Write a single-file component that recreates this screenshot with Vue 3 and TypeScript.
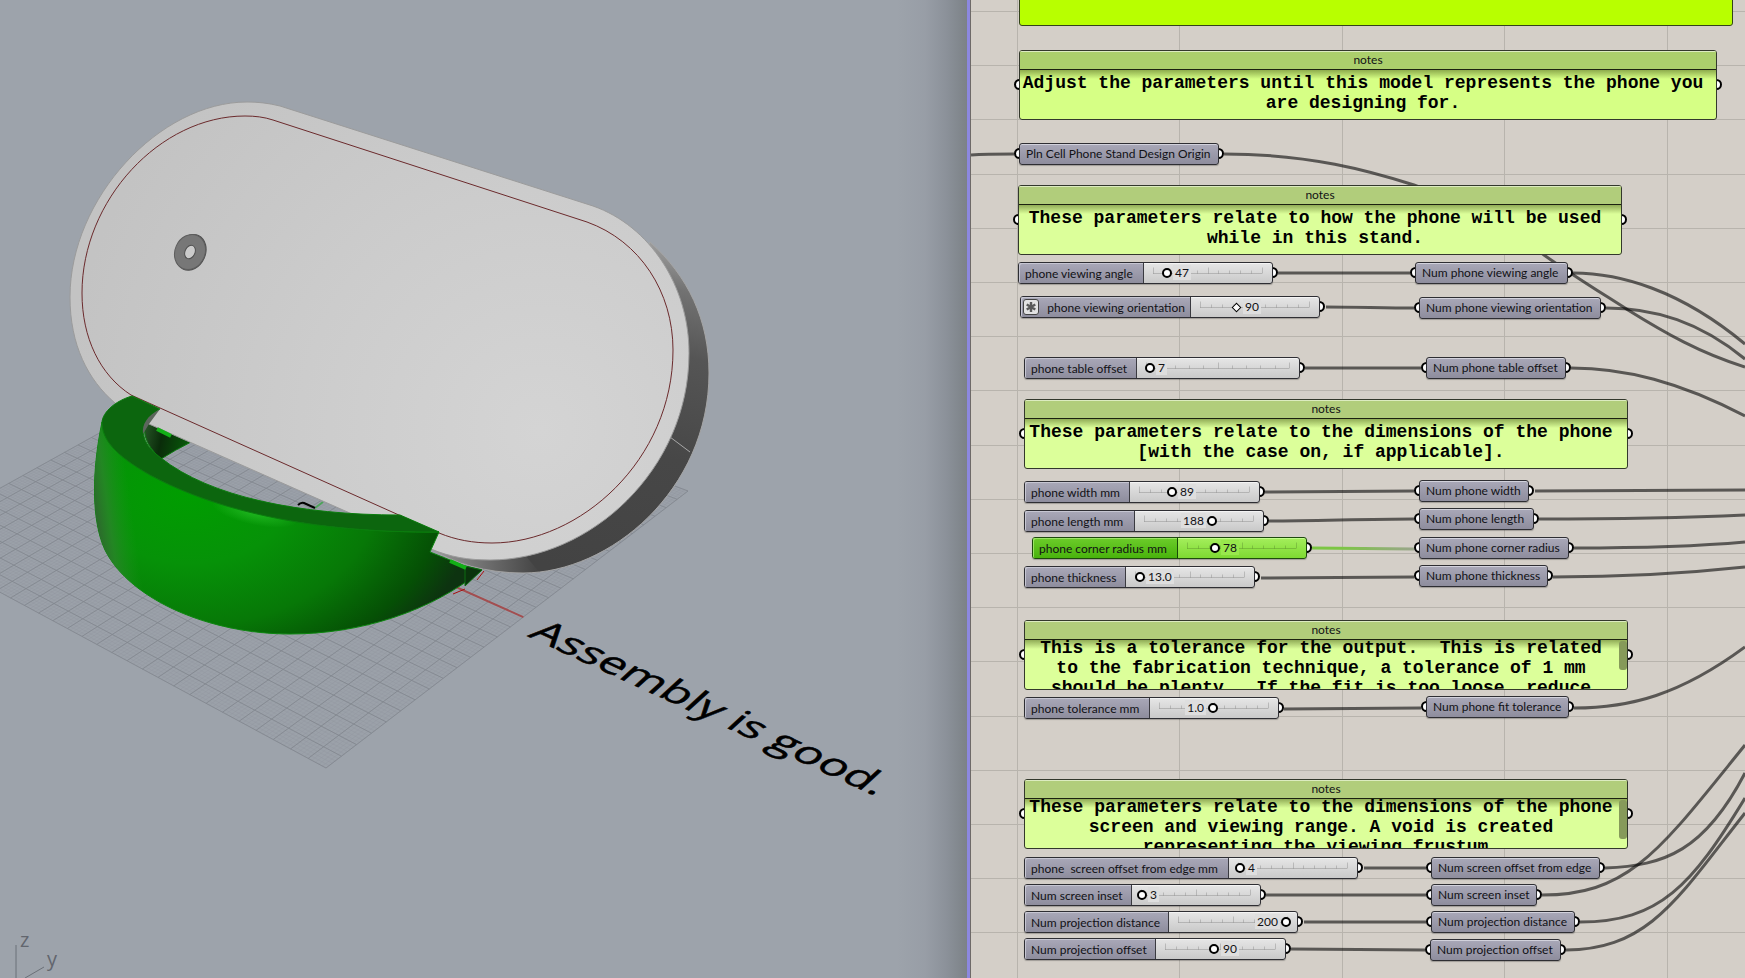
<script setup lang="ts">
import { reactive } from 'vue'

interface Note { x: number; y: number; w: number; lines: string[]; bright?: boolean; scroll?: number }
interface Param { x: number; y: number; w: number; label: string }
interface Slider {
  id: string; x: number; y: number; w: number; labelW: number; label: string
  text: string; pos: number; side?: 'left'; selected?: boolean; icon?: boolean
}
interface Wire { d: string; selected?: boolean }
type Pt = [number, number]

/* Graph canvas: node positions are in world units, the pan moves them into view. */
const panX = 971
const canvasW = 774
const canvasH = 978

const gridX = Array.from({ length: 5 }, (_, i) => Math.floor(1017 + i * 162.5))
const gridY = Array.from({ length: 18 }, (_, i) => Math.floor(11.5 + i * 54.2))

const notes: Note[] = [
  { x: 1019, y: 50, w: 698, bright: true, lines: ['Adjust the parameters until this model represents the phone you', 'are designing for.'] },
  { x: 1018, y: 185, w: 604, lines: ['These parameters relate to how the phone will be used', 'while in this stand.'] },
  { x: 1024, y: 399, w: 604, lines: ['These parameters relate to the dimensions of the phone', '[with the case on, if applicable].'] },
  { x: 1024, y: 620, w: 604, scroll: 29, lines: ['This is a tolerance for the output.  This is related', 'to the fabrication technique, a tolerance of 1 mm', 'should be plenty.  If the fit is too loose, reduce'] },
  { x: 1024, y: 779, w: 604, scroll: 39, lines: ['These parameters relate to the dimensions of the phone', 'screen and viewing range. A void is created', 'representing the viewing frustum.'] },
]

const params: Param[] = [
  { x: 1019, y: 143, w: 200, label: 'Pln Cell Phone Stand Design Origin' },
  { x: 1415, y: 262, w: 153, label: 'Num phone viewing angle' },
  { x: 1419, y: 297, w: 182, label: 'Num phone viewing orientation' },
  { x: 1426, y: 357, w: 140, label: 'Num phone table offset' },
  { x: 1419, y: 480, w: 110, label: 'Num phone width' },
  { x: 1419, y: 508, w: 115, label: 'Num phone length' },
  { x: 1419, y: 537, w: 150, label: 'Num phone corner radius' },
  { x: 1419, y: 565, w: 129, label: 'Num phone thickness' },
  { x: 1426, y: 696, w: 143, label: 'Num phone fit tolerance' },
  { x: 1431, y: 857, w: 169, label: 'Num screen offset from edge' },
  { x: 1431, y: 884, w: 106, label: 'Num screen inset' },
  { x: 1431, y: 911, w: 144, label: 'Num projection distance' },
  { x: 1430, y: 939, w: 131, label: 'Num projection offset' },
]

const sliders = reactive<Slider[]>([
  { id: 'angle', x: 1018, y: 262, w: 255, labelW: 125, label: 'phone viewing angle', text: '47', pos: 13 },
  { id: 'orientation', x: 1020, y: 296, w: 300, labelW: 170, label: 'phone viewing orientation', text: '90', pos: 34, icon: true },
  { id: 'table', x: 1024, y: 357, w: 276, labelW: 112, label: 'phone table offset', text: '7', pos: 3 },
  { id: 'width', x: 1024, y: 481, w: 236, labelW: 105, label: 'phone width mm', text: '89', pos: 30 },
  { id: 'length', x: 1024, y: 510, w: 240, labelW: 110, label: 'phone length mm', text: '188', pos: 63, side: 'left' },
  { id: 'radius', x: 1032, y: 537, w: 275, labelW: 145, label: 'phone corner radius mm', text: '78', pos: 26, selected: true },
  { id: 'thickness', x: 1024, y: 566, w: 231, labelW: 101, label: 'phone thickness', text: '13.0', pos: 5 },
  { id: 'tolerance', x: 1024, y: 697, w: 255, labelW: 125, label: 'phone tolerance mm', text: '1.0', pos: 50, side: 'left' },
  { id: 'edge', x: 1024, y: 857, w: 334, labelW: 204, label: 'phone  screen offset from edge mm', text: '4', pos: 2 },
  { id: 'inset', x: 1024, y: 884, w: 237, labelW: 107, label: 'Num screen inset', text: '3', pos: 1 },
  { id: 'distance', x: 1024, y: 911, w: 274, labelW: 144, label: 'Num projection distance', text: '200', pos: 100, side: 'left' },
  { id: 'projection', x: 1024, y: 938, w: 262, labelW: 131, label: 'Num projection offset', text: '90', pos: 45 },
])

const wires: Wire[] = [
  { d: 'M971 155 C985 154 1000 154 1014 154' },
  { d: 'M1224 154 C1310 154 1370 171 1414 185 C1455 200 1505 226 1544 255 C1575 277 1600 292 1628 310 C1665 333 1700 353 1745 367' },
  { d: 'M1278 273 L1410 273' },
  { d: 'M1326 307 C1355 307 1385 308 1414 308' },
  { d: 'M1305 368 L1421 368' },
  { d: 'M1265 492 C1315 492 1365 491 1414 491' },
  { d: 'M1269 521 C1315 521 1365 519 1414 519' },
  { d: 'M1312 548 L1414 549', selected: true },
  { d: 'M1261 578 C1310 578 1365 577 1414 577' },
  { d: 'M1284 709 C1330 709 1375 708 1421 708' },
  { d: 'M1364 868 L1426 868' },
  { d: 'M1266 895 L1426 895' },
  { d: 'M1304 922 L1426 922' },
  { d: 'M1291 949 C1335 949 1380 950 1425 950' },
  { d: 'M1573 273 C1620 273 1680 290 1745 344' },
  { d: 'M1606 308 C1655 308 1700 322 1745 359' },
  { d: 'M1571 368 C1625 368 1680 382 1745 416' },
  { d: 'M1535 491 C1600 491 1680 490 1745 490' },
  { d: 'M1539 519 C1600 519 1680 518 1745 515' },
  { d: 'M1574 548 C1640 548 1690 547 1745 542' },
  { d: 'M1553 577 C1620 577 1680 574 1745 567' },
  { d: 'M1574 708 C1630 708 1680 695 1745 647' },
  { d: 'M1605 868 C1665 866 1705 850 1745 773' },
  { d: 'M1542 895 C1630 895 1660 850 1745 745' },
  { d: 'M1580 922 C1660 922 1692 885 1745 798' },
  { d: 'M1566 950 C1650 950 1680 895 1745 813' },
]

const place = (n: { x: number; y: number; w: number }) => ({
  left: `${n.x - panX}px`, top: `${n.y}px`, width: `${n.w}px`,
})

const trackLen = (s: Slider) => s.w - s.labelW - 21

const tickPath = (s: Slider) => {
  const len = trackLen(s)
  let d = `M0 7.5H${len}`
  for (let i = 0; i <= 10; i++) {
    const x = Math.round((len * i) / 10) + 0.5
    d += `M${x} 7.5v${i % 5 === 0 ? -6 : -3}`
  }
  return d
}

const valueStyle = (s: Slider) => {
  const c = 9 + (trackLen(s) * s.pos) / 100
  return s.side === 'left'
    ? { right: `${Math.round(s.w - s.labelW - c + 5)}px` }
    : { left: `${Math.round(c + 6)}px` }
}

/* Ground plane: a unit square projected through its four screen corners. */
const F: Pt = [326, 768]
const R: Pt = [688, 491]
const T: Pt = [276, 335]
const L: Pt = [-95, 541]
const sx = F[0] - R[0] + T[0] - L[0]
const sy = F[1] - R[1] + T[1] - L[1]
const det = (R[0] - T[0]) * (L[1] - T[1]) - (L[0] - T[0]) * (R[1] - T[1])
const g = (sx * (L[1] - T[1]) - (L[0] - T[0]) * sy) / det
const h = ((R[0] - T[0]) * sy - sx * (R[1] - T[1])) / det
const project = (u: number, v: number) => {
  const k = 1 + g * u + h * v
  const px = ((R[0] - F[0] + g * R[0]) * u + (L[0] - F[0] + h * L[0]) * v + F[0]) / k
  const py = ((R[1] - F[1] + g * R[1]) * u + (L[1] - F[1] + h * L[1]) * v + F[1]) / k
  return `${px.toFixed(1)} ${py.toFixed(1)}`
}
const plane = (n: number) => {
  let d = ''
  for (let i = 0; i <= n; i++) {
    const t = i / n
    d += `M${project(t, 0)}L${project(t, 1)}M${project(0, t)}L${project(1, t)}`
  }
  return d
}
const minorGrid = plane(140)
const majorGrid = plane(28)
const groundOutline = `M${project(0, 0)}L${project(1, 0)}L${project(1, 1)}L${project(0, 1)}Z`
const xAxis = `M${project(0.5, 0.5)}L${project(0.5, 0)}`
</script>

<template>
  <main class="workspace">
    <section class="viewport" aria-label="Model viewport">
      <svg class="scene" viewBox="0 0 967 978" preserveAspectRatio="xMinYMin slice">
        <defs>
          <radialGradient id="face" gradientUnits="userSpaceOnUse" cx="540" cy="430" r="480">
            <stop offset="0" stop-color="#d4d4d4" />
            <stop offset="0.5" stop-color="#cccccc" />
            <stop offset="1" stop-color="#c3c3c3" />
          </radialGradient>
          <linearGradient id="side" gradientUnits="userSpaceOnUse" x1="655" y1="240" x2="560" y2="570">
            <stop offset="0" stop-color="#a0a0a0" />
            <stop offset="0.12" stop-color="#727272" />
            <stop offset="0.3" stop-color="#555555" />
            <stop offset="0.6" stop-color="#474747" />
            <stop offset="1" stop-color="#434343" />
          </linearGradient>
          <linearGradient id="sideEnd" x1="0" y1="0" x2="1" y2="0">
            <stop offset="0" stop-color="#9a9a9a" />
            <stop offset="1" stop-color="#9a9a9a" stop-opacity="0" />
          </linearGradient>
          <radialGradient id="shell" gradientUnits="userSpaceOnUse" cx="190" cy="490" r="290" gradientTransform="translate(190 490) scale(1 .72) rotate(12) translate(-190 -490)">
            <stop offset="0" stop-color="#009e00" />
            <stop offset="0.35" stop-color="#069208" />
            <stop offset="0.65" stop-color="#077807" />
            <stop offset="0.88" stop-color="#055005" />
            <stop offset="1" stop-color="#0d3310" />
          </radialGradient>
          <linearGradient id="shellEdge" gradientUnits="userSpaceOnUse" x1="94" y1="500" x2="130" y2="495">
            <stop offset="0" stop-color="#2c6a2c" />
            <stop offset="0.35" stop-color="#2a842a" stop-opacity="0.8" />
            <stop offset="1" stop-color="#1c941c" stop-opacity="0" />
          </linearGradient>
          <radialGradient id="gloss">
            <stop offset="0" stop-color="#28c028" stop-opacity="0.8" />
            <stop offset="1" stop-color="#28c028" stop-opacity="0" />
          </radialGradient>
          <linearGradient id="inner" x1="0" y1="0" x2="1" y2="0.2">
            <stop offset="0" stop-color="#2a5a2a" />
            <stop offset="0.45" stop-color="#0a2c0a" />
            <stop offset="1" stop-color="#08560a" />
          </linearGradient>
        </defs>

        <path :d="groundOutline" fill="#9ba1a9" />
        <path :d="minorGrid" class="minor" />
        <path :d="majorGrid" class="major" />
        <path :d="xAxis" class="x-axis" />
        <path d="M315 508L323 502" stroke="#4da35a" stroke-width="2" />
        <path d="M298 505Q301 502 304 503L315 508" fill="none" stroke="#000" stroke-width="2" />

        <path d="M149 415L191 442Q175 450 161 459Q136 437 149 415Z" fill="url(#inner)" stroke="#0b7a0d" />

        <path d="M650 242C688 276 709 320 709 373C709 490 610 573 523 573C485 573 455 563 431 549L560 480Z" fill="url(#side)" stroke="#a5a5a5" />
        <path d="M431 549L520 549L540 573C490 575 455 563 431 549Z" fill="url(#sideEnd)" />
        <path d="M670 437L690 452" stroke="#a8a8a8" />
        <path d="M247 102C258 102 268 103 280 106L593 206C650 226 689 286 689 353C689 470 590 560 490 560C468 560 450 557 431 549L149 424C135 417 125 410 115 403C88 380 70 345 70 297C70 198 160 102 247 102Z" fill="url(#face)" stroke="#9b9b9b" />
        <path d="M245 116C255 116 264 117 273 120L587 222C640 241 673 292 673 350C673 460 580 543 492 543C473 543 456 540 439 533L131 395C100 375 82 338 82 293C82 200 160 116 245 116Z" class="seam" />

        <g transform="rotate(24 190 252)">
          <ellipse cx="191" cy="252" rx="15" ry="19" fill="#4f4f4f" />
          <ellipse cx="190" cy="252" rx="15" ry="18" fill="#777777" stroke="#5e5e5e" />
          <ellipse cx="190" cy="252" rx="5" ry="7" fill="#cbcbcb" stroke="#4f4f4f" />
        </g>

        <path d="M102 422C92 470 91 520 105 550C130 600 210 634 290 634C360 634 430 612 482 570L465 566L430 552L439 532C310 533 215 510 150 475C115 455 102 440 102 422Z" fill="url(#shell)" stroke="#0b860d" />
        <path d="M102 422C92 470 91 520 105 550C113 567 128 582 147 594L150 475C115 455 102 440 102 422Z" fill="url(#shellEdge)" />
        <ellipse cx="255" cy="512" rx="44" ry="13" transform="rotate(12 255 512)" fill="url(#gloss)" />
        <path d="M465 566L482 570L465 586Z" fill="#0a330c" stroke="#0d6d10" />
        <path d="M132 396L160 409C142 421 134 438 161 458C210 497 300 515 400 515L439 532C310 533 215 510 150 475C115 455 102 440 102 422C103 412 115 401 132 396Z" fill="#0c660e" stroke="#0a7d0d" />
        <path d="M160 409C147 416 142 424 143 434L149 424Z" fill="#5c665c" />
        <path d="M157 429L171 436" stroke="#12b016" stroke-width="4" />
        <path d="M450 561L466 568" stroke="#12b016" stroke-width="4" />
        <path d="M477 580L484 571M453 594L465 589" stroke="#a80f0f" />

        <text class="caption" transform="matrix(1.05 .483 -.67 .61 527 636)">Assembly is good.</text>

        <path d="M16 945V978M25 978L44 967" stroke="#6b7078" />
        <text class="axis" x="20" y="947">z</text>
        <text class="axis" x="47" y="966">y</text>
      </svg>
    </section>

    <section class="canvas" aria-label="Definition canvas">
      <svg class="wires" :viewBox="`${panX} 0 ${canvasW} ${canvasH}`" preserveAspectRatio="xMinYMin slice">
        <defs>
          <linearGradient id="live" gradientUnits="userSpaceOnUse" x1="1340" y1="0" x2="1414" y2="0">
            <stop offset="0" stop-color="#7cc644" />
            <stop offset="1" stop-color="#9aa58c" />
          </linearGradient>
        </defs>
        <path v-for="x in gridX" :key="`x${x}`" class="rule" :d="`M${x}.5 0V978`" />
        <path v-for="y in gridY" :key="`y${y}`" class="rule" :d="`M971 ${y}.5H1745`" />
        <path v-for="w in wires" :key="w.d" :class="['wire', { live: w.selected }]" :d="w.d" />
      </svg>

      <div class="banner" :style="place({ x: 1019, y: -20, w: 714 })"></div>

      <article v-for="n in notes" :key="n.y" :class="['node', 'note', { bright: n.bright }]" :style="place(n)">
        <i class="port in"></i><i class="port out"></i>
        <div class="note-box">
          <h2>notes</h2>
          <div class="note-body">
            <p :class="{ scrolled: n.scroll }"><span v-for="l in n.lines" :key="l">{{ l }}</span></p>
            <div v-if="n.scroll" class="thumb" :style="{ height: `${n.scroll}px` }"></div>
          </div>
        </div>
      </article>

      <div v-for="p in params" :key="p.label" class="node" :style="place(p)">
        <i class="port in"></i><i class="port out"></i>
        <div class="capsule">{{ p.label }}</div>
      </div>

      <div v-for="s in sliders" :key="s.id" :class="['node', { selected: s.selected }]" :style="place(s)">
        <i class="port out"></i>
        <div class="capsule slider">
          <div class="name" :style="{ width: `${s.labelW}px` }">
            <button v-if="s.icon" type="button" class="star" aria-label="Expression">
              <svg viewBox="0 0 14 14"><path d="M7 2V12M2.7 4.5L11.3 9.5M11.3 4.5L2.7 9.5" /></svg>
            </button>
            <label :for="s.id">{{ s.label }}</label>
          </div>
          <div class="track">
            <svg class="ticks" :width="trackLen(s) + 1" height="9"><path :d="tickPath(s)" /></svg>
            <output :for="s.id" :style="valueStyle(s)">{{ s.text }}</output>
            <input :id="s.id" v-model.number="s.pos" type="range" min="0" max="100" :class="{ diamond: s.icon }" />
          </div>
        </div>
      </div>
    </section>
  </main>
</template>

<style>
body {
  margin: 0;
  overflow: hidden;
}
</style>

<style scoped>
.workspace {
  display: grid;
  grid-template-columns: 967fr 778fr;
  height: 100vh;
  font: 12px/20px Lato, "Open Sans", sans-serif;
  color: #111115;
}
.viewport {
  position: relative;
  overflow: hidden;
  background: #9da3ab;
}
.viewport::after {
  content: "";
  position: absolute;
  inset: 0 0 0 auto;
  width: 70px;
  background: linear-gradient(90deg, transparent, rgba(70, 70, 90, 0.06) 40%, rgba(60, 65, 75, 0.18) 70%, rgba(60, 65, 65, 0.34));
}
.scene,
.wires {
  display: block;
  width: 100%;
  height: 100%;
}
.minor {
  fill: none;
  stroke: #8e939b;
  stroke-width: 0.3;
}
.major {
  fill: none;
  stroke: #82868e;
  stroke-width: 0.8;
}
.x-axis {
  stroke: #a34e50;
  stroke-width: 2;
}
.seam {
  fill: none;
  stroke: #6b2a2c;
}
.caption {
  font-family: "Open Sans", "Noto Sans", sans-serif;
  font-size: 40px;
  fill: #000;
  stroke: #000;
  stroke-width: 0.6;
}
.axis {
  font-family: "Open Sans", "Noto Sans", sans-serif;
  font-size: 20px;
  fill: #62666e;
}
.canvas {
  position: relative;
  overflow: hidden;
  border-left: 3px solid #8c88e0;
  box-shadow: inset 1px 0 #6e6a68;
  background: #d4cfc8;
  padding-left: 1px;
}
.rule {
  stroke: #b8b4ad;
}
.wire {
  fill: none;
  stroke: rgba(0, 0, 0, 0.58);
  stroke-width: 3;
}
.live {
  stroke: url(#live);
}
.banner {
  position: absolute;
  box-sizing: border-box;
  margin-left: 1px;
  height: 46px;
  border: 1px solid #33421a;
  border-radius: 3px;
  background: #b8ff00;
}
.node {
  position: absolute;
  margin-left: 1px;
}
.port {
  position: absolute;
  top: 50%;
  box-sizing: border-box;
  width: 11px;
  height: 11px;
  margin-top: -6px;
  border: 2px solid #000;
  border-radius: 50%;
  background: #fff;
}
.in {
  left: -5px;
}
.out {
  right: -5px;
}
.note-box {
  position: relative;
  box-sizing: border-box;
  height: 70px;
  overflow: hidden;
  border: 1px solid #33382c;
  border-radius: 3px;
  background: #dcff9a;
}
.note h2 {
  box-sizing: border-box;
  height: 19px;
  margin: 0;
  border-top: 1px solid #dcebc0;
  border-bottom: 1px solid #1c2210;
  background: #b1cd7b;
  font-size: 12px;
  font-weight: 400;
  line-height: 15px;
  text-align: center;
}
.bright .note-box {
  background: #d6ff85;
}
.bright h2 {
  background: #abcf6c;
}
.note-body {
  position: relative;
  height: 49px;
  overflow: hidden;
  background: linear-gradient(rgba(70, 90, 20, 0.5), transparent 9px);
}
.note p {
  margin: 3px 10px 0 0;
  font: bold 18px/20px "Liberation Mono", monospace;
  color: #000;
  text-align: center;
}
.note p.scrolled {
  margin-top: -2px;
}
.note span {
  display: block;
  white-space: pre;
}
.thumb {
  position: absolute;
  top: 1px;
  right: 0;
  width: 8px;
  border-radius: 3px;
  background: #869a5a;
}
.capsule {
  position: relative;
  box-sizing: border-box;
  height: 22px;
  padding: 0 6px;
  border: 1px solid #2e2e33;
  border-radius: 3px;
  box-shadow: inset 0 1px #d2d2dc, 0 1px 1px rgba(0, 0, 0, 0.25);
  background: linear-gradient(#a9a8b8, #8e8d9d);
  line-height: 19px;
  white-space: pre;
}
.slider {
  display: flex;
  padding: 0;
  background: linear-gradient(#e6e6e6, #c9c9c9);
  box-shadow: inset 0 1px #f4f4f4, 0 1px 1px rgba(0, 0, 0, 0.25);
}
.name {
  display: flex;
  align-items: center;
  justify-content: space-between;
  flex: none;
  box-sizing: border-box;
  height: 20px;
  padding: 0 5px 0 6px;
  border-right: 1px solid #3a3a40;
  border-radius: 2px 0 0 2px;
  background: linear-gradient(#a9a8b8, #8e8d9d);
  box-shadow: inset 1px 1px #c6c6d2;
}
.selected .slider {
  border-color: #1d4a0c;
  background: linear-gradient(#a4ee5c, #7ed932);
  box-shadow: inset 0 1px #c4ff8c, 0 1px 1px rgba(0, 0, 0, 0.25);
}
.selected .name {
  border-color: #174a08;
  background: linear-gradient(#6ccc2a, #49b30c);
  box-shadow: inset 1px 1px #9ae464;
}
.star {
  display: block;
  width: 16px;
  height: 16px;
  margin-left: -4px;
  padding: 0;
  border: 1px solid #444;
  border-radius: 3px;
  background: #e2e2e2;
}
.star svg {
  display: block;
  width: 14px;
  height: 14px;
}
.star path {
  stroke: #5a5a5a;
  stroke-width: 2.4;
}
.track {
  position: relative;
  flex: 1;
}
.ticks {
  position: absolute;
  left: 9px;
  top: 3px;
}
.ticks path {
  fill: none;
  stroke: rgba(0, 0, 0, 0.16);
}
.track output {
  position: absolute;
  top: 2px;
  padding: 0 2px;
  background: #dedede;
  line-height: 15px;
}
.selected output {
  background: #98e74c;
}
.track input {
  position: absolute;
  left: 4px;
  top: 5px;
  width: calc(100% - 10px);
  height: 10px;
  margin: 0;
  appearance: none;
  background: transparent;
}
.track input::-webkit-slider-thumb {
  appearance: none;
  box-sizing: border-box;
  width: 10px;
  height: 10px;
  border: 2px solid #000;
  border-radius: 50%;
  background: #fff;
}
.track .diamond::-webkit-slider-thumb {
  width: 7px;
  height: 7px;
  border-width: 1px;
  border-radius: 0;
  transform: rotate(45deg);
}
</style>
